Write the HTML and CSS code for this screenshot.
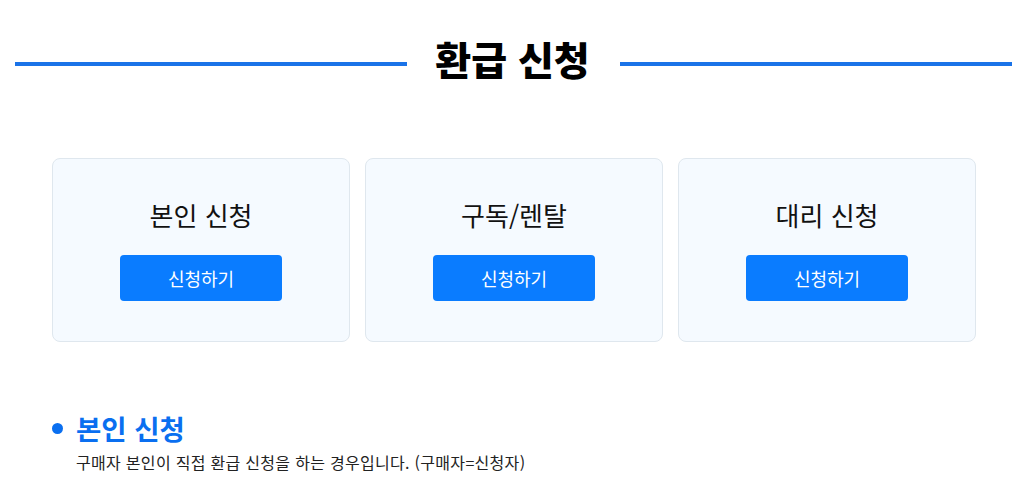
FILE: index.html
```html
<!DOCTYPE html>
<html lang="ko">
<head>
  <meta charset="UTF-8">
  <meta name="viewport" content="width=device-width, initial-scale=1.0">
  <title>환급 신청</title>
  <link rel="stylesheet" href="styles.css">
</head>
<body>
  <div class="page">
    <!-- Title -->
    <div class="title-row">
      <span class="title-line"></span>
      <h1 class="title">환급 신청</h1>
      <span class="title-line"></span>
    </div>

    <!-- Request types -->
    <div class="cards">
      <div class="card">
        <div class="card-title">본인 신청</div>
        <button class="card-btn">신청하기</button>
      </div>
      <div class="card">
        <div class="card-title">구독/렌탈</div>
        <button class="card-btn">신청하기</button>
      </div>
      <div class="card">
        <div class="card-title">대리 신청</div>
        <button class="card-btn">신청하기</button>
      </div>
    </div>

    <!-- Detail -->
    <div class="section">
      <h2 class="section-title"><span class="dot"></span>본인 신청</h2>
      <p class="section-desc">구매자 본인이 직접 환급 신청을 하는 경우입니다. (구매자=신청자)</p>
    </div>
  </div>
</body>
</html>
```

FILE: styles.css
```css
body {
  margin: 0;
  padding: 0;
  background-color: #fff;
  font-family: "Noto Sans CJK KR", "Noto Sans", sans-serif;
  color: #111;
}
.page {
  padding: 36px 12px 0 15px;
}
.title-row {
  display: flex;
  align-items: center;
  height: 44px;
}
.title-line {
  flex: 1;
  height: 4px;
  background-color: #1a73e8;
  margin-top: 12px;
}
.title {
  margin: 0 30px 0 28px;
  font-size: 39px;
  font-weight: 900;
  line-height: 44px;
  color: #000;
  letter-spacing: 0;
}
.cards {
  display: grid;
  grid-template-columns: repeat(3, 298px);
  gap: 15px;
  margin: 78px 0 0 37px;
}
.card {
  height: 184px;
  box-sizing: border-box;
  background-color: #f5faff;
  border: 1px solid #dfe7ee;
  border-radius: 8px;
  display: flex;
  flex-direction: column;
  align-items: center;
  padding-top: 38px;
}
.card-title {
  font-size: 26px;
  line-height: 36px;
  color: #111;
}
.card-btn {
  margin-top: 22px;
  width: 162px;
  height: 46px;
  border: none;
  border-radius: 4px;
  background-color: #0a7cff;
  color: #fff;
  font-family: inherit;
  font-size: 18px;
  cursor: pointer;
}
.section {
  margin: 67px 0 0 37px;
}
.section-title {
  display: flex;
  align-items: center;
  margin: 0;
  font-size: 27.5px;
  font-weight: 700;
  line-height: 38px;
  color: #0a6ff0;
}
.dot {
  width: 11px;
  height: 11px;
  border-radius: 50%;
  background-color: #0a6ff0;
  margin-right: 13px;
}
.section-desc {
  margin: 4px 0 0 24px;
  font-size: 16px;
  line-height: 22px;
  letter-spacing: 0.3px;
  color: #222;
}
```
